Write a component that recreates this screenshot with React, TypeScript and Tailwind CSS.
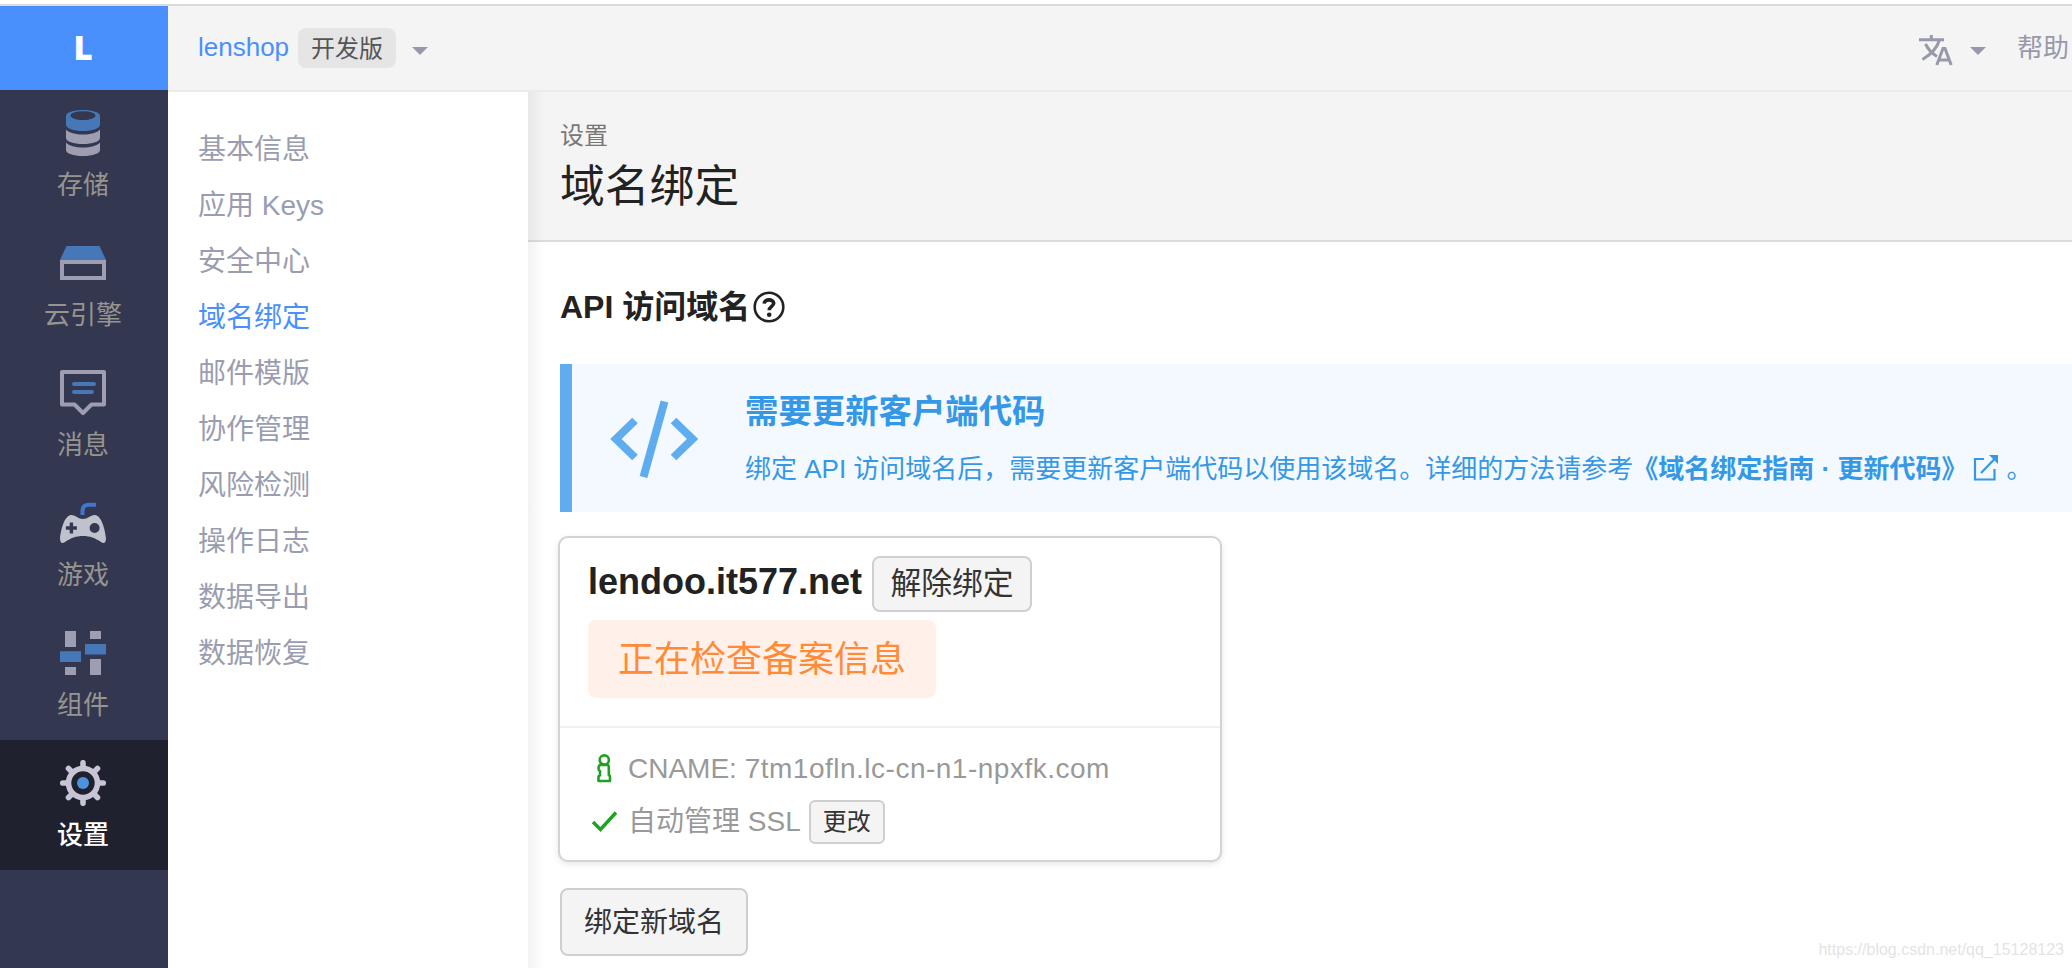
import type { ReactNode } from "react";

// ────────────────────────────────────────────
// Data
// ────────────────────────────────────────────

const MENU = [
  "基本信息",
  "应用 Keys",
  "安全中心",
  "域名绑定",
  "邮件模版",
  "协作管理",
  "风险检测",
  "操作日志",
  "数据导出",
  "数据恢复",
];

const NAV: { label: string; icon: ReactNode; active?: boolean }[] = [
  { label: "存储", icon: <StorageIcon /> },
  { label: "云引擎", icon: <EngineIcon /> },
  { label: "消息", icon: <MessageIcon /> },
  { label: "游戏", icon: <GameIcon /> },
  { label: "组件", icon: <ComponentIcon /> },
  { label: "设置", icon: <GearIcon />, active: true },
];

// ────────────────────────────────────────────
// App
// ────────────────────────────────────────────

export default function App() {
  return (
    <div className="flex h-[968px] w-[2072px] flex-col overflow-hidden bg-white pt-1 font-['Liberation_Sans','Noto_Sans_CJK_SC',sans-serif] text-[#222]">
      <div className="h-0.5 shrink-0 bg-[#dadade]" />
      <div className="flex min-h-0 flex-1">
        <Sidebar />
        <div className="flex min-w-0 flex-1 flex-col">
          <TopBar />
          <div className="flex min-h-0 flex-1">
            <SubMenu />
            <Content />
          </div>
        </div>
      </div>
    </div>
  );
}

function Sidebar() {
  return (
    <nav className="flex w-[168px] shrink-0 flex-col bg-[#343750]">
      <div className="flex h-[84px] items-center justify-center bg-[#4a90fc] pr-0.5 font-['Open_Sans',sans-serif] text-[33px] font-extrabold text-white">
        L
      </div>
      {NAV.map((item) => (
        <a
          key={item.label}
          className={`flex h-[130px] flex-col items-center pt-5 pr-0.5 text-[26px] leading-8 ${
            item.active ? "bg-[#20212f] font-medium text-white" : "text-[#96958f]"
          }`}
        >
          {item.icon}
          <span className="mt-[13px]">{item.label}</span>
        </a>
      ))}
    </nav>
  );
}

function TopBar() {
  return (
    <header className="flex h-[86px] shrink-0 items-center border-b-2 border-[#ebebeb] bg-[#f4f4f4] pb-0.5 pl-[30px] text-[26px] leading-8">
      <span className="text-[#4a90fc]">lenshop</span>
      <span className="mt-0.5 ml-[9px] flex h-10 items-center rounded-lg bg-[#e5e5e5] px-[13px] pt-0.5 text-2xl text-[#555]">
        开发版
      </span>
      <Caret className="mt-2 ml-4" />
      <div className="ml-auto flex w-[153px] shrink-0 items-center text-[#9799ab]">
        <TranslateIcon />
        <Caret className="mt-2 ml-[17px]" />
        <span className="mt-0.5 ml-[31px] whitespace-nowrap">帮助</span>
      </div>
    </header>
  );
}

function SubMenu() {
  return (
    <ul className="w-[360px] shrink-0 bg-white pt-[30px] pl-[30px] text-[28px] leading-[56px] text-[#9a9db0]">
      {MENU.map((label) => (
        <li key={label} className={label === "域名绑定" ? "text-[#4a90fc]" : ""}>
          {label}
        </li>
      ))}
    </ul>
  );
}

function Content() {
  return (
    <main className="relative min-w-0 flex-1">
      {/* Edge shadow cast by the sub menu */}
      <div className="absolute inset-y-0 left-0 w-4 bg-linear-to-r from-black/5 to-transparent" />

      <div className="h-[150px] border-b-2 border-[#dcdcdc] bg-[#f4f4f4] pt-7 pl-8">
        <div className="text-2xl leading-8 text-[#777]">设置</div>
        <h1 className="mt-1 text-[44.8px] leading-[60px]">域名绑定</h1>
      </div>

      <div className="pl-8">
        <h2 className="flex h-[122px] items-center gap-[3px] pt-2 text-[32px] font-bold">
          API 访问域名
          <HelpIcon />
        </h2>

        <div className="flex h-[148px] border-l-12 border-[#5facee] bg-[#f4f9ff] text-[#3498e6]">
          <CodeIcon />
          <div className="ml-[46px] pt-[22px] whitespace-nowrap">
            <div className="text-[33.4px] leading-[52px] font-bold">需要更新客户端代码</div>
            <div className="mt-2 flex items-center text-[26px] leading-[46px]">
              <span>绑定 API 访问域名后，需要更新客户端代码以使用该域名。详细的方法请参考</span>
              <b className="-ml-px">《域名绑定指南 · 更新代码》</b>
              <ExternalIcon />
              <span className="ml-[7px]">。</span>
            </div>
          </div>
        </div>

        <DomainCard />

        <button className="mt-[26px] h-[68px] w-[188px] rounded-lg border-2 border-[#cfcfcf] bg-[#f4f4f4] pt-0.5 text-[28px] text-[#333]">
          绑定新域名
        </button>
      </div>

      <span className="absolute right-2 bottom-1.5 text-base leading-6 text-[#e4e4e4]">
        https://blog.csdn.net/qq_15128123
      </span>
    </main>
  );
}

function DomainCard() {
  return (
    <section className="mt-6 -ml-0.5 h-[326px] w-[664px] rounded-[10px] border-2 border-[#d3d3d3] bg-white shadow-[0_2px_6px_rgba(0,0,0,0.1)]">
      <div className="h-[190px] border-b-2 border-[#f0f0f0] pt-[18px] pl-7">
        <div className="flex">
          <h3 className="mt-[5px] text-4xl leading-[42px] font-bold">lendoo.it577.net</h3>
          <button className="ml-2.5 h-14 w-40 rounded-lg border-2 border-[#cfcfcf] bg-[#f4f4f4] text-[30.8px] leading-10 text-[#333]">
            解除绑定
          </button>
        </div>
        <div className="mt-2 flex h-[78px] w-[348px] items-center justify-center rounded-lg bg-[#fff1e9] pt-0.5 text-4xl text-[#ff8b38]">
          正在检查备案信息
        </div>
      </div>
      <div className="pt-[21px] pl-[31px] text-[28px] text-[#999]">
        <div className="flex h-10 items-center">
          <InfoIcon />
          <span className="ml-[13px]">
            CNAME: <span className="tracking-[0.5px]">7tm1ofln.lc-cn-n1-npxfk.com</span>
          </span>
        </div>
        <div className="mt-[11px] flex h-11 items-center">
          <CheckIcon />
          <span className="ml-[9px]">自动管理 SSL</span>
          <button className="ml-2 h-11 w-[76px] rounded-md border-2 border-[#cfcfcf] bg-[#f4f4f4] text-2xl leading-9 text-[#333]">
            更改
          </button>
        </div>
      </div>
    </section>
  );
}

// ────────────────────────────────────────────
// Icons
// ────────────────────────────────────────────

function Caret({ className }: { className: string }) {
  return (
    <svg className={className} width="16" height="8" viewBox="0 0 16 8" fill="#9799ab">
      <path d="M0 0H16L8 8Z" />
    </svg>
  );
}

function StorageIcon() {
  return (
    <svg className="shrink-0" width="46" height="46" viewBox="0 0 46 46">
      <path
        d="M6 6C6 2.500 13.500 0 23 0S40 2.500 40 6V14.500C40 18.500 32.500 21 23 21S6 18.500 6 14.500ZM10.500 5.500C10.500 8 16 10 23 10S35.500 8 35.500 5.500 30 1.200 23 1.200 10.500 3 10.500 5.500Z"
        fill="#4678b8"
        fillRule="evenodd"
      />
      <path d="M6 19.500C9 23 15.500 24.500 23 24.500S37 23 40 19.500V28C40 31.500 32.500 34 23 34S6 31.500 6 28Z" fill="#9e9db1" />
      <path d="M6 32.500C9 36 15.500 37.500 23 37.500S37 36 40 32.500V40C40 43.500 32.500 46 23 46S6 43.500 6 40Z" fill="#9e9db1" />
    </svg>
  );
}

function EngineIcon() {
  return (
    <svg className="shrink-0" width="46" height="46" viewBox="0 0 46 46">
      <path d="M6.500 6H39.500L46 20H0Z" fill="#4678b8" />
      <path d="M2 22H44V38H2Z" fill="none" stroke="#9e9db1" strokeWidth="4" />
    </svg>
  );
}

function MessageIcon() {
  return (
    <svg className="shrink-0" width="46" height="46" viewBox="0 0 46 46" fill="none" strokeWidth="4">
      <path d="M2 2H44V34.500H31.500L23 43L14.500 34.500H2Z" stroke="#9e9db1" strokeLinejoin="round" />
      <path d="M14 14H34M14 22H32" stroke="#4678b8" strokeLinecap="round" />
    </svg>
  );
}

function GameIcon() {
  return (
    <svg className="shrink-0" width="46" height="46" viewBox="0 0 46 46">
      <path d="M22.500 15V11.500Q22.500 4.800 29 4.800H36" fill="none" stroke="#4176cc" strokeWidth="4" />
      <path
        d="M11 15C15 14.500 18 19 23 19S31 14.500 35 15C42 16 45 30 46 38C46 43 44 44 41 42C35 38 30 36 23 36S11 38 5 42C2 44 0 43 0 38C1 30 4 16 11 15ZM9.700 22.500V26.300H5.900V29.700H9.700V33.500H13.100V29.700H16.900V26.300H13.100V22.500ZM39.600 28A5 5 0 1 0 29.600 28A5 5 0 1 0 39.600 28Z"
        fill="#bfc2cc"
        fillRule="evenodd"
      />
    </svg>
  );
}

function ComponentIcon() {
  return (
    <svg className="shrink-0" width="46" height="46" viewBox="0 0 46 46">
      <path d="M5 1H16V17H5ZM5 37H16V45H5ZM30 1H41V9H30ZM30 29H41V45H30Z" fill="#9e9db1" />
      <path d="M0 21.300H21V32H0ZM25 14H46V24.500H25Z" fill="#4678b8" />
    </svg>
  );
}

function GearIcon() {
  return (
    <svg className="shrink-0" width="46" height="46" viewBox="0 0 46 46">
      <g fill="none" stroke="#c6c4d5">
        <circle cx="23" cy="23" r="14.500" strokeWidth="5.600" />
        <path
          d="M23 7V2.700M23 39V43.300M7 23H2.700M39 23H43.300M12 12L8.500 8.500M34 34L37.500 37.500M34 12L37.500 8.500M12 34L8.500 37.500"
          strokeWidth="5.600"
          strokeLinecap="round"
        />
      </g>
      <circle cx="23" cy="23" r="6" fill="#4c92df" />
    </svg>
  );
}

function TranslateIcon() {
  return (
    <svg className="mt-1.5" width="34" height="31" viewBox="0 0 34 31" fill="none" stroke="#9799ab" strokeWidth="3">
      <path d="M0 4.800H25M12.300 0V4.800M20.500 5C18 13 11 20 3.500 24.500M6.500 9C9 14 13 18.500 18 21.500" />
      <path d="M17.800 30L24 13.500H26L32.200 30M20 25H30" />
    </svg>
  );
}

function HelpIcon() {
  return (
    <svg width="32" height="32" viewBox="0 0 32 32" fill="none" stroke="#222">
      <circle cx="16" cy="16" r="14.300" strokeWidth="2.600" />
      <path d="M11.200 12.600C11.500 7.700 20.600 7.700 20.700 12.400C20.700 15.300 16.200 15.600 16.200 19.300" strokeWidth="3.600" />
      <circle cx="16.200" cy="23.700" r="2.300" fill="#222" stroke="none" />
    </svg>
  );
}

function CodeIcon() {
  return (
    <svg className="mt-9 ml-[38px] shrink-0" width="89" height="79" viewBox="0 0 89 79" fill="none" stroke="#5facee" strokeWidth="8">
      <path d="M25 20.500L6 39L25 57.500M63.500 20.500L82.500 39L63.500 57.500M54.500 1.500L33.500 77" strokeLinejoin="miter" />
    </svg>
  );
}

function ExternalIcon() {
  return (
    <svg className="-mt-0.5 ml-1.5" width="26" height="28" viewBox="0 0 26 28" fill="none" stroke="#3498e6" strokeWidth="2.200">
      <path d="M11 5H2V25.500H21.500V15M8 19L21 5.500" />
      <path d="M16 1H25V10Z" fill="#3498e6" stroke="none" />
    </svg>
  );
}

function InfoIcon() {
  return (
    <svg className="ml-1.5 shrink-0" width="18" height="30" viewBox="0 0 18 30" fill="none" stroke="#21a121" strokeWidth="2.600">
      <circle cx="7.300" cy="6" r="4.600" />
      <path
        d="M3.500 11H10C11 11 11.800 11.800 11.800 13V21C13 21.500 13 22 13 23V27H1.500V23C1.500 22 2 21.500 3 21.500V17C1.500 16.500 1.500 16 1.500 14.500C1.500 12 2.500 11 3.500 11Z"
        strokeLinejoin="round"
      />
    </svg>
  );
}

function CheckIcon() {
  return (
    <svg className="shrink-0" width="28" height="24" viewBox="0 0 28 24" fill="none" stroke="#21a121" strokeWidth="3.400">
      <path d="M2 12L9.500 19.500L25 2.500" />
    </svg>
  );
}
